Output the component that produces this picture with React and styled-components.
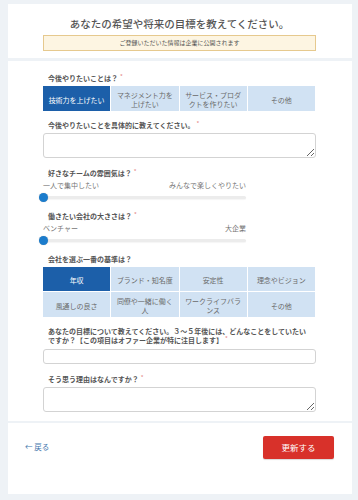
import React, { useState } from "react";
import styled, { createGlobalStyle } from "styled-components";

const Global = createGlobalStyle`
  html, body { margin: 0; padding: 0; background: #eef2f6; overflow: hidden; }
  body { font-family: "Noto Sans CJK JP", "Noto Sans", sans-serif; color: #555; }
  * { box-sizing: border-box; }
`;

const Page = styled.div`
  display: flex;
  flex-direction: column;
  padding: 4px 6px 6px 8px;
  height: 500px;
`;

const Card = styled.section`
  background: #fff;
  margin-top: ${(p) => p.$gap || 0}px;
`;

const Header = styled(Card)`
  height: 54px;
  padding: 13px 36px 0 35px;
  display: flex;
  flex-direction: column;
  align-items: center;
`;

const Title = styled.h1`
  margin: 0;
  font-size: 10.5px;
  line-height: 14px;
  font-weight: 500;
  color: #555;
  white-space: nowrap;
`;

const Notice = styled.div`
  margin-top: 4px;
  width: 100%;
  height: 16px;
  background: #fdf5e2;
  border: 1px solid #e6c98e;
  font-size: 6px;
  line-height: 14px;
  text-align: center;
  color: #555;
`;

const Form = styled(Card)`
  height: 360px;
  padding: 13px 36px 0 35px;
  display: flex;
  flex-direction: column;
`;

const Field = styled.div`
  display: flex;
  flex-direction: column;
  margin-bottom: ${(p) => (p.$tight ? 8.5 : 10.5)}px;
`;

const Label = styled.div`
  padding-left: 5px;
  max-width: ${(p) => p.$width || 273}px;
  font-size: 7px;
  line-height: 8.5px;
  font-weight: 700;
  color: #555;
  margin-bottom: ${(p) => p.$mb ?? 3.5}px;
`;

const Req = styled.span`
  color: #e48484;
  font-weight: 400;
  font-size: 6px;
  line-height: 6px;
  margin-left: 2px;
  vertical-align: top;
`;

const Options = styled.div`
  display: grid;
  grid-template-columns: repeat(4, 1fr);
  grid-auto-rows: 24.5px;
  gap: 1px;
  width: 272px;
`;

const Option = styled.button`
  border: none;
  margin: 0;
  padding: 3.5px 4px 0;
  font-family: inherit;
  font-size: 7px;
  line-height: 8.8px;
  text-align: center;
  display: block;
  cursor: pointer;
  background: ${(p) => (p.$active ? "#1c5fa9" : "#d1e2f3")};
  color: ${(p) => (p.$active ? "#fff" : "#6a6a6a")};
  overflow: hidden;
`;

const TextArea = styled.textarea`
  display: block;
  width: 273px;
  height: 25px;
  margin: 0;
  border: 1px solid #d3d3d3;
  border-radius: 3px;
  resize: vertical;
  font-family: inherit;
  font-size: 7px;
  padding: 3px 4px;
  background: #fff;
`;

const Input = styled.input`
  display: block;
  width: 273px;
  height: 15px;
  margin: 0;
  border: 1px solid #d3d3d3;
  border-radius: 3px;
  font-family: inherit;
  font-size: 7px;
  padding: 0 4px;
  background: #fff;
`;

const SliderEnds = styled.div`
  width: 203px;
  display: flex;
  justify-content: space-between;
  margin-top: 3px;
  font-size: 7px;
  line-height: 10px;
  color: #777;
`;

const SliderArea = styled.div`
  position: relative;
  width: 203px;
  height: 12px;
  margin-top: 1px;
  display: flex;
  align-items: center;
`;

const Track = styled.div`
  width: 100%;
  height: 3px;
  border-radius: 2px;
  background: #ececec;
  box-shadow: 0 1px 1px rgba(0, 0, 0, 0.04);
`;

const Thumb = styled.div`
  position: absolute;
  left: -4px;
  top: 50%;
  width: 9px;
  height: 9px;
  margin-top: -4.5px;
  border-radius: 50%;
  background: #1b7ccc;
  box-shadow: 0 0 1px rgba(0, 0, 0, 0.3);
`;

const Footer = styled(Card)`
  height: 71px;
  padding: 13px 18px 0 17px;
  display: flex;
  justify-content: space-between;
  align-items: flex-start;
`;

const Back = styled.a`
  margin-top: 6px;
  font-size: 7.5px;
  line-height: 10px;
  color: #4677ad;
  text-decoration: none;
  display: flex;
  align-items: center;
  gap: 2px;
`;

const Submit = styled.button`
  width: 71px;
  height: 22.5px;
  border: none;
  border-radius: 2px;
  background: #d8312a;
  color: #fff;
  font-family: inherit;
  font-size: 8.5px;
  cursor: pointer;
  box-shadow: 0 1px 1px rgba(0, 0, 0, 0.15);
`;

const Choice = ({ items, active }) => {
  const [sel, setSel] = useState(active);
  return (
    <Options>
      {items.map((t, i) => (
        <Option key={i} $active={sel === i} onClick={() => setSel(i)}>
          {t.split("\n").map((l, j) => (
            <React.Fragment key={j}>
              {j > 0 && <br />}
              {l}
            </React.Fragment>
          ))}
        </Option>
      ))}
    </Options>
  );
};

const Slider = ({ left, right }) => (
  <>
    <SliderEnds>
      <span>{left}</span>
      <span>{right}</span>
    </SliderEnds>
    <SliderArea>
      <Track />
      <Thumb />
    </SliderArea>
  </>
);

export default function App() {
  return (
    <>
      <Global />
      <Page>
        <Header>
          <Title>あなたの希望や将来の目標を教えてください。</Title>
          <Notice>ご登録いただいた情報は企業に公開されます</Notice>
        </Header>
        <Form $gap={3}>
          <Field>
            <Label>
              今後やりたいことは？<Req>*</Req>
            </Label>
            <Choice
              active={0}
              items={["技術力を上げたい", "マネジメント力を\n上げたい", "サービス・プロダ\nクトを作りたい", "その他"]}
            />
          </Field>
          <Field>
            <Label>
              今後やりたいことを具体的に教えてください。<Req>*</Req>
            </Label>
            <TextArea />
          </Field>
          <Field $tight>
            <Label $mb={0}>
              好きなチームの雰囲気は？<Req>*</Req>
            </Label>
            <Slider left="一人で集中したい" right="みんなで楽しくやりたい" />
          </Field>
          <Field $tight>
            <Label $mb={0}>
              働きたい会社の大きさは？<Req>*</Req>
            </Label>
            <Slider left="ベンチャー" right="大企業" />
          </Field>
          <Field>
            <Label>会社を選ぶ一番の基準は？</Label>
            <Choice
              active={0}
              items={[
                "年収",
                "ブランド・知名度",
                "安定性",
                "理念やビジョン",
                "風通しの良さ",
                "同僚や一緒に働く\n人",
                "ワークライフバラ\nンス",
                "その他",
              ]}
            />
          </Field>
          <Field>
            <Label $mb={5} $width={266}>
              あなたの目標について教えてください。３～５年後には、どんなことをしていたいですか？【この項目はオファー企業が特に注目します】<Req>*</Req>
            </Label>
            <Input />
          </Field>
          <Field>
            <Label>
              そう思う理由はなんですか？<Req>*</Req>
            </Label>
            <TextArea />
          </Field>
        </Form>
        <Footer $gap={2}>
          <Back href="#">← 戻る</Back>
          <Submit>更新する</Submit>
        </Footer>
      </Page>
    </>
  );
}
